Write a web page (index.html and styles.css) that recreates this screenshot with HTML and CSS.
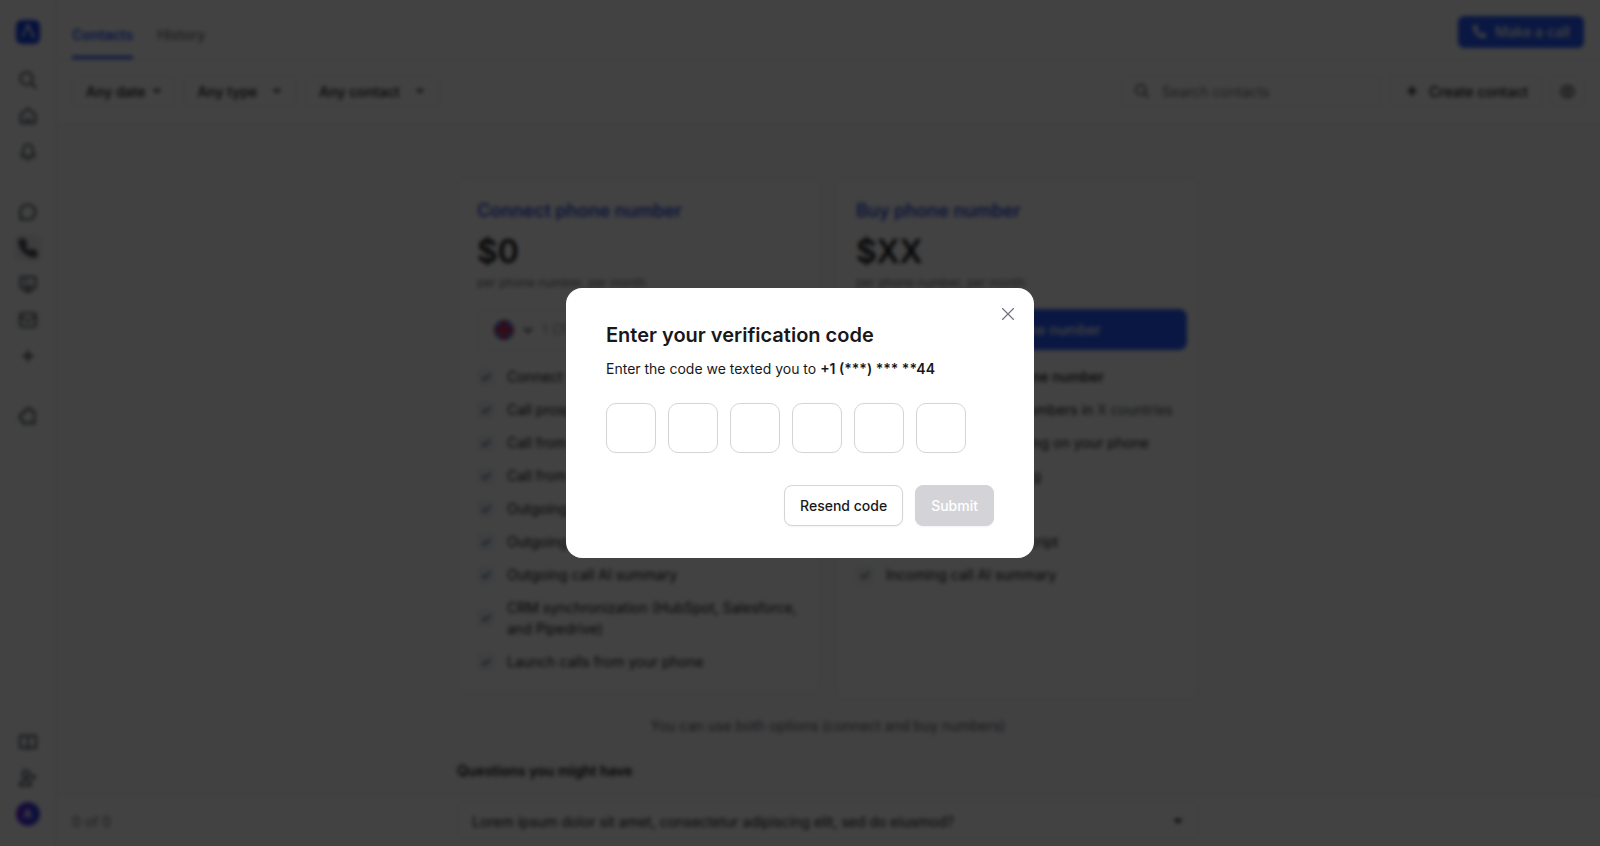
FILE: index.html
```html
<!DOCTYPE html>
<html lang="en">
<head>
    <meta charset="UTF-8">
    <meta name="viewport" content="width=device-width, initial-scale=1.0">
    <title>Contacts - Verification</title>
    <link rel="stylesheet" href="styles.css">
</head>
<body>
    <svg class="sprite" aria-hidden="true">
        <symbol id="check" viewBox="0 0 20 20">
            <path d="M6 10.5l2.700 2.700L14.200 7.200" fill="none" stroke="currentColor" stroke-width="1.600" stroke-linecap="round" stroke-linejoin="round"/>
        </symbol>
        <symbol id="caret" viewBox="0 0 12 12">
            <path d="M2 4.500l4 3.500 4-3.500z" fill="currentColor" stroke="currentColor" stroke-linejoin="round"/>
        </symbol>
        <symbol id="search" viewBox="0 0 20 20">
            <circle cx="8.500" cy="8.500" r="6.200" fill="none" stroke="currentColor" stroke-width="2"/>
            <path d="M13 13l4.800 4.800" stroke="currentColor" stroke-width="2" stroke-linecap="round"/>
        </symbol>
        <symbol id="phone" viewBox="0 0 20 20">
            <path d="M3 1.500h2.500c.8 0 1.300.5 1.600 1.200l1.100 2.900c.2.700 0 1.300-.5 1.700L6.400 8.400c1 2.200 2.900 4.100 5.200 5.200l1.200-1.300c.4-.5 1-.700 1.700-.5l2.900 1.100c.700.300 1.100.9 1.100 1.600V17c0 1-.700 1.700-1.700 1.700C8.500 18.700 1.300 11.500 1.300 3.200c0-1 .7-1.700 1.700-1.700z" fill="currentColor"/>
        </symbol>
        <symbol id="plus" viewBox="0 0 20 20">
            <path d="M10 5.500v9M5.500 10h9" stroke="currentColor" stroke-width="2.400" stroke-linecap="round"/>
        </symbol>
    </svg>

    <div class="app">
        <nav class="sidebar">
            <a href="#" class="logo" aria-label="Home page">
                <svg viewBox="0 0 24 24"><g fill="none" stroke="currentColor" stroke-width="1.800" stroke-linecap="round"><path d="M9.500 10L12 6l3 5 2.500 5"/><path d="M9 12l-2.500 4"/></g><circle cx="12" cy="6" r="1.800" fill="currentColor"/><circle cx="17" cy="16.500" r="1.500" fill="currentColor"/></svg>
            </a>
            <div class="nav-group">
                <a href="#" class="nav-item" aria-label="Search"><svg><use href="#search"/></svg></a>
                <a href="#" class="nav-item" aria-label="Home"><svg viewBox="0 0 20 20"><path d="M2.800 8.500L10 2.500l7.200 6v8.500H2.800z"/><path d="M6.500 13.800h7"/></svg></a>
                <a href="#" class="nav-item" aria-label="Notifications"><svg viewBox="0 0 20 20"><path d="M10 2.500c-3 0-4.800 2.200-4.800 5v3L3.300 14.500h13.400l-1.900-4v-3c0-2.800-1.800-5-4.800-5z"/><path d="M8 17.300h4"/></svg></a>
            </div>
            <div class="nav-group">
                <a href="#" class="nav-item" aria-label="Chats"><svg viewBox="0 0 20 20"><path d="M2.200 17.500l.6-4.200A7.600 7.600 0 1 1 6 16.800z"/></svg></a>
                <a href="#" class="nav-item active" aria-label="Calls"><svg><use href="#phone"/></svg></a>
                <a href="#" class="nav-item" aria-label="Chatbots"><svg viewBox="0 0 20 20"><path d="M2.500 3h15v9c0 2-1.500 3-3 3h-9c-1.500 0-3-1-3-3z"/><path d="M6.500 17.800h7M6 7h4M6 11c2 1.500 6 1.500 8 0"/></svg></a>
                <a href="#" class="nav-item" aria-label="Mail"><svg viewBox="0 0 20 20"><rect x="2" y="3.500" width="16" height="13" rx="2"/><path d="M2.500 6.500l7.500 5 7.500-5"/></svg></a>
                <a href="#" class="nav-item" aria-label="Add"><svg><use href="#plus"/></svg></a>
            </div>
            <div class="nav-group">
                <a href="#" class="nav-item" aria-label="Integrations"><svg viewBox="0 0 20 20"><path d="M5 6h2.500c0-2.500 1-4 3-4s3 1.500 3 3.500h3v12h-2.500c0-2-3-2-3 0H5V14c-2.500 0-3.500-1.200-3.500-3S2.500 8 5 8z"/></svg></a>
            </div>
            <div class="nav-group nav-bottom">
                <a href="#" class="nav-item" aria-label="Guides"><svg viewBox="0 0 20 20"><path d="M10 4.500c-2-1.200-5-1.200-8-.7V16c3-.5 6-.5 8 .7 2-1.200 5-1.200 8-.7V3.800c-3-.5-6-.5-8 .7zM10 4.500v12"/></svg></a>
                <a href="#" class="nav-item" aria-label="Invite"><svg viewBox="0 0 20 20"><circle cx="8" cy="6" r="3.500"/><path d="M2 17.500c0-4 2.500-5.500 6-5.500s5 1.500 5 5.500zM15.500 6.500v5M13 9h5"/></svg></a>
                <a href="#" class="avatar" aria-label="Account">A</a>
            </div>
        </nav>

        <main class="page">
            <header class="topbar">
                <div class="tabs">
                    <a href="#" class="tab selected">Contacts</a>
                    <a href="#" class="tab">History</a>
                </div>
                <button type="button" class="call-btn"><svg><use href="#phone"/></svg>Make a call</button>
            </header>

            <div class="toolbar">
                <button type="button" class="filter filter-date">Any date<svg><use href="#caret"/></svg></button>
                <button type="button" class="filter">Any type<svg><use href="#caret"/></svg></button>
                <button type="button" class="filter">Any contact<svg><use href="#caret"/></svg></button>
                <div class="search-box">
                    <svg><use href="#search"/></svg>
                    <input type="text" placeholder="Search contacts" aria-label="Search contacts">
                </div>
                <button type="button" class="filter create-btn"><svg><use href="#plus"/></svg>Create contact</button>
                <button type="button" class="gear-btn" aria-label="Settings"><svg viewBox="0 0 20 20"><path d="M10 2.500l2 1.700 3.600.2.700 3.200L18 10l-1.700 2.400-.7 3.200-3.600.2-2 1.700-2-1.700-3.600-.2-.7-3.200L2 10l1.700-2.400.7-3.200L8 4.200z"/><circle cx="10" cy="10" r="2.500"/></svg></button>
            </div>

            <div class="content">
                <div class="plans">
                    <section class="plan">
                        <h2>Connect phone number</h2>
                        <p class="price">$0</p>
                        <p class="per">per phone number, per month</p>
                        <div class="phone-field">
                            <svg class="flag" viewBox="0 0 20 20"><circle cx="10" cy="10" r="10" fill="#2447b8"/><path d="M3 3l14 14M17 3L3 17" stroke="#dfe3f5" stroke-width="1"/><path d="M10 0v20M0 10h20" stroke="#c9b8d8" stroke-width="5"/><path d="M10 0v20M0 10h20" stroke="#d8183c" stroke-width="4"/></svg>
                            <svg class="chevron" viewBox="0 0 12 12"><path d="M2 4l4 4 4-4"/></svg>
                            <input type="tel" placeholder="1 (702) 123-4567" aria-label="Phone number">
                        </div>
                        <ul>
                            <li><svg><use href="#check"/></svg>Connect your number</li>
                            <li><svg><use href="#check"/></svg>Call prospects</li>
                            <li><svg><use href="#check"/></svg>Call from browser</li>
                            <li><svg><use href="#check"/></svg>Call from CRM</li>
                            <li><svg><use href="#check"/></svg>Outgoing call recording</li>
                            <li><svg><use href="#check"/></svg>Outgoing call transcript</li>
                            <li><svg><use href="#check"/></svg>Outgoing call AI summary</li>
                            <li><svg><use href="#check"/></svg>CRM synchronization (HubSpot, Salesforce, and Pipedrive)</li>
                            <li><svg><use href="#check"/></svg>Launch calls from your phone</li>
                        </ul>
                    </section>
                    <section class="plan plan-buy">
                        <h2>Buy phone number</h2>
                        <p class="price">$XX</p>
                        <p class="per">per phone number, per month</p>
                        <button type="button" class="buy-btn">Buy new phone number</button>
                        <ul>
                            <li class="strong"><svg><use href="#check"/></svg>All from: Connect phone number</li>
                            <li><svg><use href="#check"/></svg><span>Access to all phone numbers in <a href="#">X countries</a></span></li>
                            <li><svg><use href="#check"/></svg>Incoming call forwarding on your phone</li>
                            <li><svg><use href="#check"/></svg>Incoming call recording</li>
                            <li><svg><use href="#check"/></svg>Call routing</li>
                            <li><svg><use href="#check"/></svg>Incoming call AI transcript</li>
                            <li><svg><use href="#check"/></svg>Incoming call AI summary</li>
                        </ul>
                    </section>
                </div>
                <p class="note">You can use both options (connect and buy numbers)</p>
                <h3>Questions you might have</h3>
                <button type="button" class="question">Lorem ipsum dolor sit amet, consectetur adipiscing elit, sed do eiusmod?<svg><use href="#caret"/></svg></button>
            </div>
            <footer class="statusbar">0 of 0</footer>
        </main>
    </div>

    <div class="overlay">
        <form class="modal" role="dialog" aria-labelledby="modalTitle">
            <button type="button" class="close-btn" aria-label="Close"><svg viewBox="0 0 12 12"><path d="M.5.5l11 11M11.500.5l-11 11"/></svg></button>
            <h1 id="modalTitle">Enter your verification code</h1>
            <p>Enter the code we texted you to <strong>+1 (***) *** **44</strong></p>
            <div class="code">
                <input type="text" inputmode="numeric" maxlength="1" aria-label="Digit 1">
                <input type="text" inputmode="numeric" maxlength="1" aria-label="Digit 2">
                <input type="text" inputmode="numeric" maxlength="1" aria-label="Digit 3">
                <input type="text" inputmode="numeric" maxlength="1" aria-label="Digit 4">
                <input type="text" inputmode="numeric" maxlength="1" aria-label="Digit 5">
                <input type="text" inputmode="numeric" maxlength="1" aria-label="Digit 6">
            </div>
            <div class="actions">
                <button type="button" class="resend-btn">Resend code</button>
                <button type="submit" class="submit-btn" disabled>Submit</button>
            </div>
        </form>
    </div>
</body>
</html>
```
FILE: styles.css
```css
:root {
    --blue: #265aff;
    --text: #18181b;
    --icon: #4b535e;
    --muted: #71747c;
    --border: #e6e6ea;
    --control-border: #d4d4d8;
}

* {
    margin: 0;
    padding: 0;
    box-sizing: border-box;
}

body {
    font-family: Inter, "Liberation Sans", sans-serif;
    font-size: 14px;
    line-height: 21px;
    color: var(--text);
    background: white;
}

button, input {
    font: inherit;
    color: inherit;
    background: white;
}

a {
    color: inherit;
    text-decoration: none;
}

.sprite {
    display: none;
}

.app {
    display: flex;
    height: 100vh;
    overflow: hidden;
}

/* Sidebar */
.sidebar {
    display: flex;
    flex-direction: column;
    align-items: center;
    flex: none;
    gap: 32px;
    width: 56px;
    padding: 20px 0;
    border-right: 1px solid var(--border);
}

.logo {
    width: 24px;
    height: 24px;
    margin-bottom: -10px;
    border-radius: 6px;
    background: #1543e8;
    color: white;
}

.logo svg {
    display: block;
}

.nav-group {
    display: flex;
    flex-direction: column;
    align-items: center;
    gap: 8px;
}

.nav-item {
    display: grid;
    place-items: center;
    width: 28px;
    height: 28px;
    border-radius: 6px;
    color: var(--icon);
}

.nav-item svg {
    width: 20px;
    height: 20px;
    fill: none;
    stroke: currentColor;
    stroke-width: 2;
    stroke-linejoin: round;
}

.nav-item.active {
    background: #f0f0f2;
    color: #52525b;
}

.nav-bottom {
    margin-top: auto;
}

.avatar {
    width: 24px;
    height: 24px;
    margin-top: 2px;
    border-radius: 50%;
    background: linear-gradient(90deg, #6a1fe0, #2148e8);
    color: white;
    font-size: 12px;
    font-weight: 600;
    line-height: 24px;
    text-align: center;
}

/* Header and filters */
.page {
    position: relative;
    display: flex;
    flex-direction: column;
    flex: 1;
    min-width: 0;
}

.topbar {
    display: flex;
    align-items: center;
    justify-content: space-between;
    flex: none;
    height: 60px;
    padding: 0 16px;
    border-bottom: 1px solid var(--border);
}

.tabs {
    display: flex;
    align-self: stretch;
    gap: 24px;
}

.tab {
    padding-top: 24px;
    color: var(--muted);
    font-weight: 500;
}

.tab.selected {
    border-bottom: 3px solid var(--blue);
    color: var(--blue);
    font-weight: 600;
}

.call-btn {
    display: flex;
    align-items: center;
    gap: 8px;
    height: 32px;
    margin-top: 4px;
    padding: 0 14px;
    border: none;
    border-radius: 6px;
    background: var(--blue);
    color: white;
    font-weight: 500;
}

.call-btn svg {
    width: 15px;
    height: 15px;
}

.toolbar {
    display: flex;
    flex: none;
    gap: 8px;
    padding: 15px 16px 16px;
    border-bottom: 1px solid var(--border);
}

.filter {
    display: flex;
    align-items: center;
    gap: 14px;
    height: 32px;
    padding: 0 13px;
    border: 1px solid var(--border);
    border-radius: 6px;
    font-weight: 500;
    white-space: nowrap;
}

.filter svg {
    width: 12px;
    height: 12px;
    color: var(--icon);
}

.filter-date {
    gap: 6px;
    padding: 0 11px 0 13px;
}

.search-box {
    display: flex;
    align-items: center;
    gap: 12px;
    width: 260px;
    margin-left: auto;
    padding: 0 12px;
    border: 1px solid var(--border);
    border-radius: 6px;
}

.search-box svg {
    flex: none;
    width: 16px;
    height: 16px;
    color: var(--icon);
}

.search-box input,
.phone-field input {
    flex: 1;
    min-width: 0;
    border: none;
    outline: none;
}

.search-box input::placeholder {
    color: var(--muted);
}

.create-btn {
    gap: 8px;
}

.create-btn svg {
    width: 18px;
    height: 18px;
    color: var(--text);
}

.gear-btn {
    display: grid;
    place-items: center;
    width: 34px;
    height: 32px;
    border: 1px solid var(--border);
    border-radius: 6px;
}

.gear-btn svg {
    width: 17px;
    height: 17px;
    fill: none;
    stroke: var(--icon);
    stroke-width: 2;
}

/* Plans */
.content {
    flex: 1;
    min-height: 0;
    padding: 54px 16px 0;
    background: #fafafb;
}

.content > * {
    position: relative;
    z-index: 1;
    max-width: 742px;
    margin-left: auto;
    margin-right: auto;
}

.plans {
    display: grid;
    grid-template-columns: 1fr 1fr;
    align-items: start;
    gap: 16px;
}

.plan {
    padding: 20px 11px 20px 19px;
    border: 1px solid var(--border);
    border-radius: 8px;
    background: white;
}

.plan-buy {
    min-height: 521px;
}

.plan h2 {
    margin-bottom: 8px;
    color: #3150d8;
    font-size: 18px;
    font-weight: 600;
    line-height: 24px;
}

.price {
    font-size: 32px;
    font-weight: 600;
    line-height: 42px;
}

.per {
    margin-bottom: 16px;
    color: var(--muted);
    font-size: 12px;
    line-height: 20px;
}

.phone-field {
    display: flex;
    align-items: center;
    gap: 8px;
    height: 41px;
    padding: 0 16px;
    border: 1px solid var(--border);
    border-radius: 8px;
}

.flag {
    width: 20px;
    height: 20px;
}

.chevron {
    width: 12px;
    height: 12px;
    fill: none;
    stroke: var(--icon);
    stroke-width: 2;
}

.phone-field input::placeholder {
    color: #a1a1aa;
}

.buy-btn {
    display: block;
    width: 100%;
    height: 41px;
    border: none;
    border-radius: 8px;
    background: var(--blue);
    color: white;
    font-weight: 500;
}

.plan ul {
    display: flex;
    flex-direction: column;
    gap: 12px;
    margin-top: 16px;
    list-style: none;
}

.plan li {
    display: flex;
    align-items: center;
    gap: 12px;
}

.plan li svg {
    flex: none;
    width: 18px;
    height: 18px;
    border-radius: 4px;
    background: #eef2f8;
    color: #3c4660;
}

.plan li a {
    color: var(--icon);
}

.plan .strong {
    font-weight: 500;
}

.note {
    margin-top: 16px;
    color: #5e6170;
    text-align: center;
}

.content h3 {
    margin-top: 24px;
    font-size: 14px;
    font-weight: 600;
}

.question {
    display: flex;
    align-items: center;
    justify-content: space-between;
    width: 100%;
    height: 40px;
    margin-top: 20px;
    padding: 0 14px;
    border: 1px solid var(--border);
    border-radius: 8px;
    text-align: left;
}

.question svg {
    width: 12px;
    height: 12px;
}

.statusbar {
    position: absolute;
    right: 0;
    bottom: 0;
    left: 0;
    padding: 15px 16px 14px;
    border-top: 1px solid var(--border);
    background: white;
    color: var(--muted);
}

/* Modal */
.overlay {
    position: fixed;
    inset: 0;
    z-index: 10;
    display: flex;
    align-items: center;
    justify-content: center;
    background: rgba(0, 0, 0, 0.74);
    backdrop-filter: blur(2px);
}

.modal {
    position: relative;
    width: 468px;
    padding: 32px 40px;
    border-radius: 16px;
    background: white;
}

.close-btn {
    position: absolute;
    top: 16px;
    right: 16px;
    display: grid;
    place-items: center;
    width: 20px;
    height: 20px;
    border: none;
}

.close-btn svg {
    width: 12px;
    height: 12px;
    fill: none;
    stroke: var(--muted);
    stroke-width: 1.2;
    stroke-linecap: round;
}

.modal h1 {
    margin-bottom: 8px;
    font-size: 20px;
    font-weight: 600;
    line-height: 30px;
}

.modal strong {
    font-weight: 600;
}

.code {
    display: flex;
    gap: 12px;
    margin: 24px 0 32px;
}

.code input {
    width: 50px;
    height: 50px;
    border: 1px solid var(--control-border);
    border-radius: 10px;
    text-align: center;
}

.actions {
    display: flex;
    justify-content: flex-end;
    gap: 12px;
}

.actions button {
    height: 41px;
    padding: 0 15px;
    border: 1px solid var(--control-border);
    border-radius: 8px;
    box-shadow: 0 1px 2px rgba(0, 0, 0, 0.05);
    font-weight: 500;
}

.actions .submit-btn {
    background: var(--control-border);
    color: white;
}
```
